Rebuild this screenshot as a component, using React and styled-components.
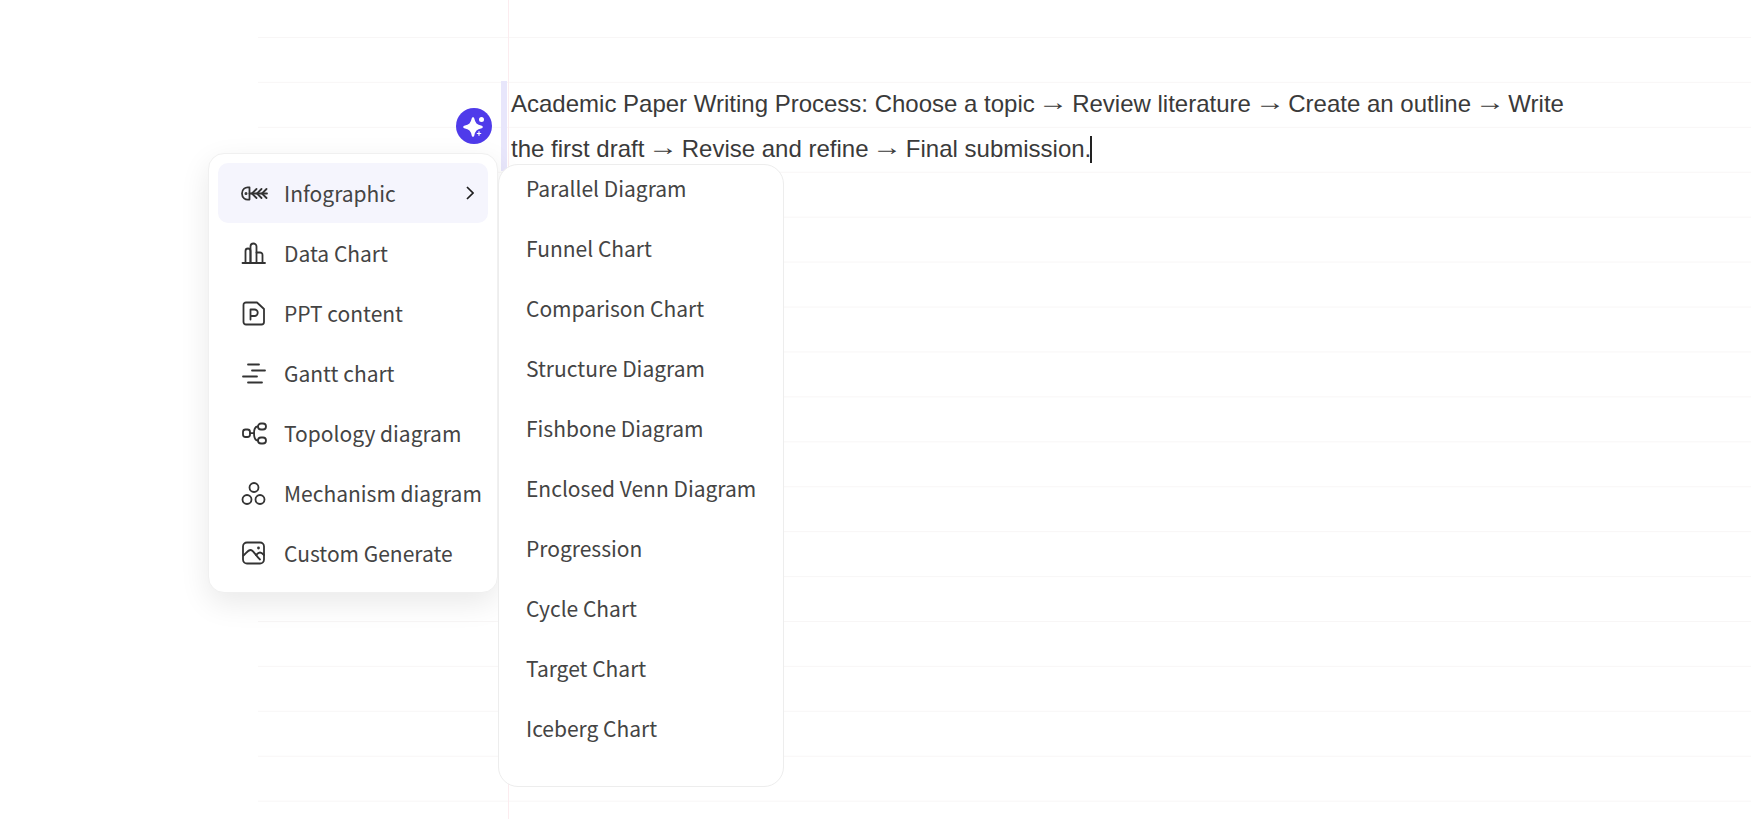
import styled, { createGlobalStyle } from "styled-components";

const mainItems = [
  { label: "Infographic", icon: "fish", active: true },
  { label: "Data Chart", icon: "bars" },
  { label: "PPT content", icon: "ppt" },
  { label: "Gantt chart", icon: "gantt" },
  { label: "Topology diagram", icon: "topology" },
  { label: "Mechanism diagram", icon: "mechanism" },
  { label: "Custom Generate", icon: "image" },
];

const subItems = [
  "Parallel Diagram",
  "Funnel Chart",
  "Comparison Chart",
  "Structure Diagram",
  "Fishbone Diagram",
  "Enclosed Venn Diagram",
  "Progression",
  "Cycle Chart",
  "Target Chart",
  "Iceberg Chart",
];

const steps = [
  "Academic Paper Writing Process: Choose a topic",
  "Review literature",
  "Create an outline",
  "Write the first draft",
  "Revise and refine",
  "Final submission.",
];

const iconPaths = {
  fish: (
    <>
      <path d="M8.5 7.5C4 6.5 1 9.5 1 13.5s3 7 7.5 6z" />
      <path d="M8.5 13.5H26" />
      <path d="M15.5 9L11 13.5l4.5 4.5M20.5 9L16 13.5l4.5 4.5M25.5 9L21 13.5l4.5 4.5" />
      <circle cx="5" cy="13.5" r="0.6" fill="currentColor" />
    </>
  ),
  bars: (
    <>
      <path d="M1.5 23H24" />
      <path d="M4.5 23V11a2.5 2.5 0 0 1 5 0v12" />
      <path d="M9.5 23V6.5a3 3 0 0 1 6 0V23" />
      <path d="M15.5 12.500H19a2.500 2.500 0 0 1 2.500 2.500v8" />
    </>
  ),
  ppt: (
    <>
      <path d="M5 2.5h11L23 9v13a2.5 2.5 0 0 1-2.5 2.5H5A2.5 2.5 0 0 1 2.5 22V5A2.5 2.5 0 0 1 5 2.5z" />
      <path d="M9.5 19.5v-10h4a3.2 3.2 0 0 1 0 6.500h-4" />
    </>
  ),
  gantt: <path d="M7 4.5h11M11 10.5h13M2 16.5h14M7 22.5h14" />,
  topology: (
    <>
      <rect x="2" y="9.5" width="7" height="7.5" rx="2.5" />
      <rect x="17" y="3.5" width="8" height="6" rx="3" />
      <rect x="17" y="17.5" width="8" height="6" rx="3" />
      <path d="M9 13.2h4" />
      <path d="M17 6.5c-3 0-4 2-4 6.5s1 7.5 4 7.5" />
    </>
  ),
  mechanism: (
    <>
      <circle cx="13" cy="7.5" r="4.5" />
      <circle cx="6" cy="19.5" r="4.5" />
      <circle cx="19" cy="19.5" r="4.5" />
    </>
  ),
  image: (
    <>
      <rect x="2" y="2.5" width="21" height="21" rx="4" />
      <path d="M2.5 15.5c2.500-2 4.500-5.500 7-5.500 3 0 5.500 6 9.500 9.500" />
      <path d="M15 15c1.500-1.500 2.500-2.500 4-2.500 1.500 0 2.500 1 4 2.500" />
      <circle cx="17.5" cy="8" r="1.4" fill="currentColor" stroke="none" />
    </>
  ),
};

function MenuIcon({ name }) {
  return (
    <IconSvg
      viewBox="0 0 27 26"
      fill="none"
      stroke="currentColor"
      strokeWidth="1.8"
      strokeLinecap="round"
      strokeLinejoin="round"
    >
      {iconPaths[name]}
    </IconSvg>
  );
}

function App() {
  return (
    <>
      <GlobalStyle />
      <Page>
        <Sheet>
          <Paragraph>
            {steps.map((step, i) => (
              <span key={step}>
                {i > 0 && (
                  <>
                    {" "}
                    <Arrow>→</Arrow>{" "}
                  </>
                )}
                {step}
              </span>
            ))}
            <Caret />
          </Paragraph>
        </Sheet>
        <AiButton>
          <svg width="36" height="36" viewBox="0 0 36 36" fill="#fff">
            <path
              d="M17 10.5c1.2 5.5 3 7.3 8.5 8.5-5.5 1.2-7.3 3-8.5 8.5-1.2-5.5-3-7.3-8.5-8.5 5.5-1.2 7.3-3 8.5-8.5z"
              stroke="#fff"
              strokeWidth="2.5"
              strokeLinejoin="round"
            />
            <circle cx="25.5" cy="11.5" r="2.5" />
            <path d="M20.5 25.5h5M23 23v5" stroke="#4f3bea" strokeWidth="3.5" />
            <path d="M20.8 25.5h4.400M23 23.3v4.400" stroke="#fff" strokeWidth="1.2" />
          </svg>
        </AiButton>
        <MainMenu>
          {mainItems.map((item) => (
            <MainItem key={item.label} $active={item.active}>
              <IconSlot>
                <MenuIcon name={item.icon} />
              </IconSlot>
              <span>{item.label}</span>
              {item.active && (
                <Chevron viewBox="0 0 8 14" fill="none" stroke="#1f1f1f" strokeWidth="1.7">
                  <path d="M1 1l6 6-6 6" />
                </Chevron>
              )}
            </MainItem>
          ))}
        </MainMenu>
        <SubMenu>
          <SubList>
            {subItems.map((label) => (
              <SubItem key={label}>{label}</SubItem>
            ))}
          </SubList>
        </SubMenu>
      </Page>
    </>
  );
}

const GlobalStyle = createGlobalStyle`
  html, body {
    margin: 0;
    padding: 0;
    background: #fff;
  }
`;

const Page = styled.div`
  position: relative;
  width: 1751px;
  height: 819px;
  overflow: hidden;
  background: #fff;
`;

const Sheet = styled.div`
  position: relative;
  box-sizing: border-box;
  height: 819px;
  margin-left: 258px;
  padding: 81px 0 0 253px;
  background-image: linear-gradient(to bottom, #f8f6f6 1px, transparent 1px);
  background-size: 100% 44.93px;
  background-position: 0 37px;

  &::before {
    content: "";
    position: absolute;
    top: 0;
    bottom: 0;
    left: 250px;
    width: 1px;
    background: #fbecef;
  }
`;

const Paragraph = styled.div`
  position: relative;
  width: 1060px;
  font-family: "Liberation Sans", Arial, sans-serif;
  font-size: 24px;
  line-height: 45px;
  color: #3a3a3a;

  &::before {
    content: "";
    position: absolute;
    left: -10px;
    top: 0;
    bottom: 0;
    width: 6px;
    background: #e8e6fb;
  }
`;

const Arrow = styled.span`
  display: inline-block;
  transform: translateY(-2px) scaleX(1.25);
`;

const Caret = styled.span`
  display: inline-block;
  width: 2px;
  height: 27px;
  margin-left: -1px;
  vertical-align: -6px;
  background: #222;
`;

const AiButton = styled.div`
  position: absolute;
  left: 456px;
  top: 108px;
  width: 36px;
  height: 36px;
  border-radius: 50%;
  background: #4f3bea;
`;

const MainMenu = styled.div`
  position: absolute;
  left: 208px;
  top: 153px;
  width: 290px;
  height: 440px;
  box-sizing: border-box;
  padding: 9px;
  background: #fff;
  border: 1px solid #f0f0f0;
  border-radius: 16px;
  box-shadow: 0 10px 30px rgba(0, 0, 0, 0.09);
  display: flex;
  flex-direction: column;
`;

const MainItem = styled.div`
  display: flex;
  align-items: center;
  height: 60px;
  flex: none;
  border-radius: 10px;
  padding-left: 23px;
  background: ${(p) => (p.$active ? "#f5f5fd" : "transparent")};
  font-family: "Noto Sans CJK SC", "Noto Sans", sans-serif;
  font-size: 21px;
  color: #444;
  white-space: nowrap;
`;

const IconSlot = styled.span`
  display: flex;
  width: 43px;
  flex: none;
  color: #333;
`;

const IconSvg = styled.svg`
  width: 27px;
  height: 26px;
`;

const Chevron = styled.svg`
  width: 8px;
  height: 14px;
  margin-left: auto;
  margin-right: 14px;
`;

const SubMenu = styled.div`
  position: absolute;
  left: 498px;
  top: 164px;
  width: 286px;
  height: 623px;
  box-sizing: border-box;
  overflow: hidden;
  padding-left: 27px;
  background: #fff;
  border: 1px solid #ededed;
  border-radius: 20px;
`;

const SubList = styled.div`
  margin-top: -7px;
`;

const SubItem = styled.div`
  height: 60px;
  display: flex;
  align-items: center;
  font-family: "Noto Sans CJK SC", "Noto Sans", sans-serif;
  font-size: 21px;
  color: #444;
  white-space: nowrap;
`;

export default App;
